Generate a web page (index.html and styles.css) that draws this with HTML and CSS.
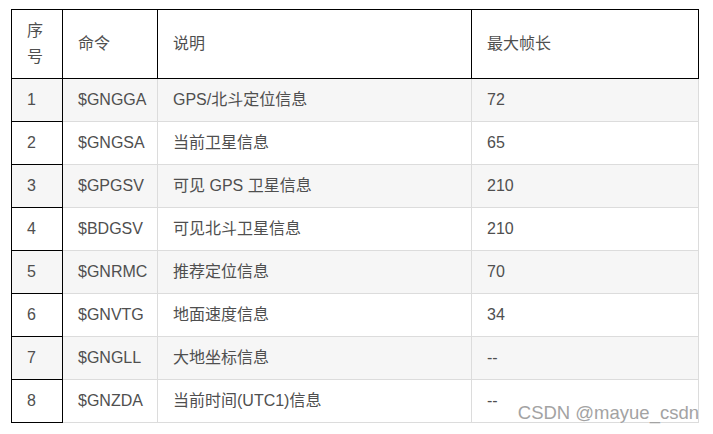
FILE: index.html
```html
<!DOCTYPE html>
<html lang="zh-CN">
<head>
<meta charset="utf-8">
<link rel="stylesheet" href="styles.css">
</head>
<body>
<div class="page">
  <table class="nmea">
    <colgroup>
      <col class="c1"><col class="c2"><col class="c3"><col class="c4">
    </colgroup>
    <thead>
      <tr><th>序号</th><th>命令</th><th>说明</th><th>最大帧长</th></tr>
    </thead>
    <tbody>
      <tr><td>1</td><td>$GNGGA</td><td>GPS/北斗定位信息</td><td>72</td></tr>
      <tr><td>2</td><td>$GNGSA</td><td>当前卫星信息</td><td>65</td></tr>
      <tr><td>3</td><td>$GPGSV</td><td>可见 GPS 卫星信息</td><td>210</td></tr>
      <tr><td>4</td><td>$BDGSV</td><td>可见北斗卫星信息</td><td>210</td></tr>
      <tr><td>5</td><td>$GNRMC</td><td>推荐定位信息</td><td>70</td></tr>
      <tr><td>6</td><td>$GNVTG</td><td>地面速度信息</td><td>34</td></tr>
      <tr><td>7</td><td>$GNGLL</td><td>大地坐标信息</td><td>--</td></tr>
      <tr><td>8</td><td>$GNZDA</td><td>当前时间(UTC1)信息</td><td>--</td></tr>
    </tbody>
  </table>
  <div class="watermark">CSDN @mayue_csdn</div>
</div>
</body>
</html>
```
FILE: styles.css
```css
html, body {
  margin: 0;
  padding: 0;
  background: #fff;
}
.page {
  position: relative;
  width: 713px;
  height: 434px;
  padding: 9px 0 0 11px;
  box-sizing: border-box;
  font-family: "Liberation Sans", "Noto Sans CJK SC", Arial, sans-serif;
  font-size: 16px;
  color: #4f4f4f;
}
.nmea {
  border-collapse: collapse;
  table-layout: fixed;
  width: 687px;
}
.c1 { width: 51px; }
.c2 { width: 95px; }
.c3 { width: 314px; }
.c4 { width: 227px; }
.nmea th, .nmea td {
  padding: 8px 15px;
  line-height: 26px;
  text-align: left;
  font-weight: normal;
  vertical-align: middle;
}
.nmea th {
  border: 1px solid #000;
  background: #fff;
}
.nmea td {
  border: 1px solid #dcdcdc;
}
.nmea td:first-child {
  border: 1px solid #000;
}
.nmea tbody tr:nth-child(odd) td {
  background: #f6f6f6;
}
.watermark {
  position: absolute;
  right: 14px;
  bottom: 10px;
  font-family: "Liberation Sans", Arial, sans-serif;
  font-size: 18.5px;
  color: #a3a3a3;
  text-shadow: 0 0 1px #fff, 0 0 1px #fff;
  line-height: 22px;
}
```
